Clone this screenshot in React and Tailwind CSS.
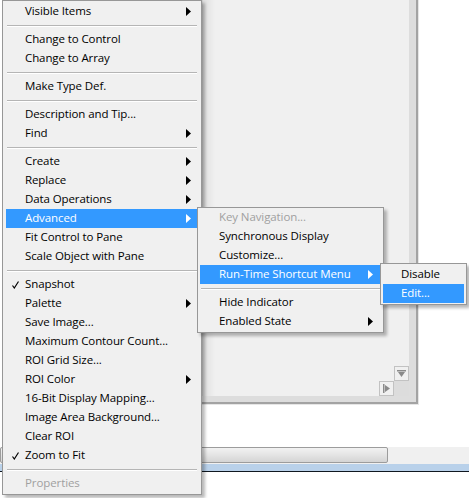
import React from "react";

function Arrow({ white }) {
  return (
    <svg width="5" height="9" viewBox="0 0 5 9" className="shrink-0">
      <path d="M0 0 L5 4.5 L0 9 Z" fill={white ? "#ffffff" : "#000000"} />
    </svg>
  );
}

function Check() {
  return (
    <svg width="7" height="8" viewBox="0 0 7 8" className="absolute left-[6px] top-[6px]">
      <path d="M0.5 4.5 L2.3 7 L6.5 0.5" fill="none" stroke="#000" strokeWidth="1.2" />
    </svg>
  );
}

function Item({ label, sub, active, disabled, checked, pad = "pl-[19px]", arrowPad = "pr-[7px]" }) {
  return (
    <div
      className={
        "relative h-[19px] flex items-center justify-between " +
        pad +
        " " +
        arrowPad +
        (active ? " bg-[#3399ff] text-white" : disabled ? " text-[#a0a0a0]" : " text-black")
      }
    >
      {checked && <Check />}
      <span className="whitespace-nowrap -mt-[2px]">{label}</span>
      {sub && <Arrow white={active} />}
    </div>
  );
}

function Sep() {
  return (
    <div className="h-[9px] flex flex-col justify-center px-[1px]">
      <div className="h-[1px] bg-[#b5b5b5]" />
      <div className="h-[1px] bg-white" />
    </div>
  );
}

const mainItems = [
  { label: "Visible Items", sub: true },
  "sep",
  { label: "Change to Control" },
  { label: "Change to Array" },
  "sep",
  { label: "Make Type Def." },
  "sep",
  { label: "Description and Tip..." },
  { label: "Find", sub: true },
  "sep",
  { label: "Create", sub: true },
  { label: "Replace", sub: true },
  { label: "Data Operations", sub: true },
  { label: "Advanced", sub: true, active: true },
  { label: "Fit Control to Pane" },
  { label: "Scale Object with Pane" },
  "sep",
  { label: "Snapshot", checked: true },
  { label: "Palette", sub: true },
  { label: "Save Image..." },
  { label: "Maximum Contour Count..." },
  { label: "ROI Grid Size..." },
  { label: "ROI Color", sub: true },
  { label: "16-Bit Display Mapping..." },
  { label: "Image Area Background..." },
  { label: "Clear ROI" },
  { label: "Zoom to Fit", checked: true },
  "sep",
  { label: "Properties", disabled: true },
];

const advItems = [
  { label: "Key Navigation...", disabled: true },
  { label: "Synchronous Display" },
  { label: "Customize..." },
  { label: "Run-Time Shortcut Menu", sub: true, active: true },
  "sep",
  { label: "Hide Indicator" },
  { label: "Enabled State", sub: true },
];

export default function App() {
  return (
    <div className="relative w-[469px] h-[498px] bg-white overflow-hidden text-[11.5px] font-['Open_Sans',sans-serif] tracking-[-0.1px]">
      {/* background window */}
      <div className="flex h-[447px]">
        <div className="w-[201px]" />
        <div className="w-[218px] h-[405px] border-r border-b border-[#e6e6e6]">
          <div className="h-full flex flex-col border-r-2 border-b-2 border-[#a3a3a3]">
            <div className="flex-1 flex">
              <div className="relative flex-1 bg-[linear-gradient(to_right,#a8a8a8,#dedede_2px,#f0f0f0_14px)]">
                <div className="absolute right-0 bottom-[15px] w-[15px] h-[15px] bg-[#f0f0f0] border border-[#c2c2c2] flex items-center justify-center">
                  <svg width="9" height="8" viewBox="0 0 9 8">
                    <rect x="0" y="0" width="9" height="1.5" fill="#8a8a8a" />
                    <path d="M1 2 L8 2 L4.5 7 Z" fill="#8a8a8a" />
                  </svg>
                </div>
                <div className="absolute right-[15px] bottom-0 w-[15px] h-[15px] bg-[#f0f0f0] border border-[#c2c2c2] flex items-center justify-center">
                  <svg width="8" height="9" viewBox="0 0 8 9">
                    <rect x="0" y="0" width="1.5" height="9" fill="#8a8a8a" />
                    <path d="M2 1 L2 8 L7 4.5 Z" fill="#8a8a8a" />
                  </svg>
                </div>
                <div className="absolute right-0 bottom-0 w-[15px] h-[15px] bg-[#dcdcdc]" />
              </div>
              <div className="w-[7px] bg-[#dddddd]" />
            </div>
            <div className="h-[6px] bg-[#dddddd]" />
          </div>
        </div>
      </div>
      <div className="h-[17px] flex bg-[#f0f0f0]">
        <div className="w-[388px] h-[16px] border border-[#9c9c9c] rounded-[2px] bg-[linear-gradient(to_bottom,#f2f2f2,#e4e4e4_50%,#d4d4d4)]" />
      </div>
      <div className="h-[7px] bg-[#b9d1ea]" />
      <div className="h-[1px] bg-[#101820]" />

      {/* main context menu */}
      <div className="absolute left-[2px] top-0 w-[200px] bg-[#f0f0f0] border border-[#979797] px-[3px] pt-[1px] pb-[1px] shadow-[3px_3px_3px_rgba(0,0,0,0.28)]">
        {mainItems.map((it, i) =>
          it === "sep" ? <Sep key={i} /> : <Item key={i} {...it} />
        )}
      </div>

      {/* Advanced submenu */}
      <div className="absolute left-[197px] top-[207px] w-[187px] bg-[#f0f0f0] border border-[#979797] px-[2px] pb-[1px] shadow-[3px_3px_3px_rgba(0,0,0,0.28)]">
        {advItems.map((it, i) =>
          it === "sep" ? <Sep key={i} /> : <Item key={i} {...it} arrowPad="pr-[8px]" />
        )}
      </div>

      {/* Run-Time Shortcut Menu submenu */}
      <div className="absolute left-[380px] top-[263px] w-[87px] bg-[#f0f0f0] border border-[#979797] px-[2px] pt-[1px] pb-[1px] shadow-[3px_3px_3px_rgba(0,0,0,0.28)]">
        <Item label="Disable" pad="pl-[18px]" />
        <Item label="Edit..." active pad="pl-[18px]" />
      </div>
    </div>
  );
}
